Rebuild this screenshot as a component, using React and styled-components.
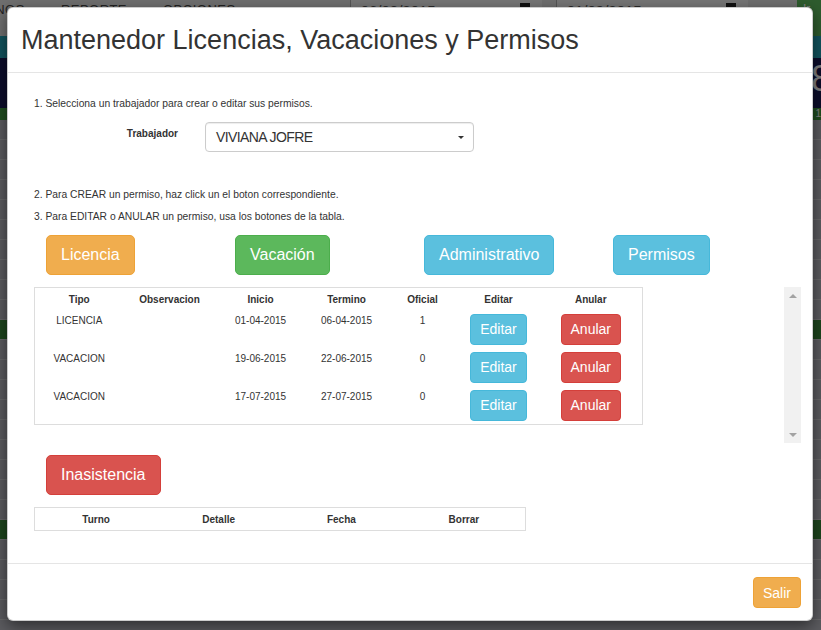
import React from 'react'
import styled, { createGlobalStyle } from 'styled-components'

const GlobalStyle = createGlobalStyle`
  html, body {
    margin: 0;
    padding: 0;
    width: 821px;
    height: 630px;
    overflow: hidden;
    font-family: "Liberation Sans", Arial, sans-serif;
    color: #333;
  }
  * { box-sizing: border-box; }
`

const permisos = [
  { tipo: 'LICENCIA', inicio: '01-04-2015', termino: '06-04-2015', oficial: '1' },
  { tipo: 'VACACION', inicio: '19-06-2015', termino: '22-06-2015', oficial: '0' },
  { tipo: 'VACACION', inicio: '17-07-2015', termino: '27-07-2015', oficial: '0' },
]

const pageRows = [
  'plain', 'plain', 'plain', 'plain', 'plain', 'plain', 'plain', 'plain', 'plain', 'plain',
  'green', 'plain', 'plain', 'plain', 'plain', 'plain', 'plain', 'plain', 'plain', 'plain',
  'green', 'plain', 'plain', 'plain', 'plain', 'plain',
]

function App() {
  return (
    <Screen>
      <GlobalStyle />
      <Page>
        <NavBar>
          <NavItem>TURNOS</NavItem>
          <NavItem>REPORTE</NavItem>
          <NavItem>OPCIONES</NavItem>
          <DateGroup>
            <DateText>06/08/2015</DateText>
            <CalIcon />
          </DateGroup>
          <DateGroup>
            <DateText>01/09/2015</DateText>
            <CalIcon />
          </DateGroup>
          <GoButton>Ir</GoButton>
        </NavBar>
        <TealBar />
        <StatsBar><BigNum>8</BigNum></StatsBar>
        <GreenBar>1</GreenBar>
        {pageRows.map((tone, i) => (
          <PageRow key={i} tone={tone} />
        ))}
      </Page>

      <Backdrop />

      <Modal>
        <Header>
          <Title>Mantenedor Licencias, Vacaciones y Permisos</Title>
        </Header>

        <Body>
          <Help mt={0}>1. Selecciona un trabajador para crear o editar sus permisos.</Help>
          <FormRow>
            <Label>Trabajador</Label>
            <Select>
              <span>VIVIANA JOFRE</span>
              <Caret />
            </Select>
          </FormRow>
          <Help mt={36}>2. Para CREAR un permiso, haz click un el boton correspondiente.</Help>
          <Help mt={8}>3. Para EDITAR o ANULAR un permiso, usa los botones de la tabla.</Help>

          <ActionGrid>
            <BigButton kind="warning">Licencia</BigButton>
            <BigButton kind="success">Vacación</BigButton>
            <BigButton kind="info">Administrativo</BigButton>
            <BigButton kind="info">Permisos</BigButton>
          </ActionGrid>

          <ScrollArea>
            <ScrollContent>
              <Table width={608}>
                <colgroup>
                  <col style={{ width: 89 }} />
                  <col style={{ width: 92 }} />
                  <col style={{ width: 90 }} />
                  <col style={{ width: 82 }} />
                  <col style={{ width: 70 }} />
                  <col style={{ width: 82 }} />
                  <col style={{ width: 103 }} />
                </colgroup>
                <thead>
                  <tr>
                    <Th>Tipo</Th>
                    <Th>Observacion</Th>
                    <Th>Inicio</Th>
                    <Th>Termino</Th>
                    <Th>Oficial</Th>
                    <Th>Editar</Th>
                    <Th>Anular</Th>
                  </tr>
                </thead>
                <tbody>
                  {permisos.map((p, i) => (
                    <tr key={i}>
                      <Td>{p.tipo}</Td>
                      <Td></Td>
                      <Td>{p.inicio}</Td>
                      <Td>{p.termino}</Td>
                      <Td>{p.oficial}</Td>
                      <Td><SmallButton kind="info">Editar</SmallButton></Td>
                      <Td><SmallButton kind="danger">Anular</SmallButton></Td>
                    </tr>
                  ))}
                </tbody>
              </Table>
            </ScrollContent>
            <ScrollBar>
              <Arrow dir="up" />
              <Arrow dir="down" />
            </ScrollBar>
          </ScrollArea>

          <InasistenciaRow>
            <BigButton kind="danger">Inasistencia</BigButton>
          </InasistenciaRow>

          <Table width={492} mt={12}>
            <thead>
              <tr>
                <Th>Turno</Th>
                <Th>Detalle</Th>
                <Th>Fecha</Th>
                <Th>Borrar</Th>
              </tr>
            </thead>
          </Table>
        </Body>

        <Footer>
          <SmallButton kind="warning">Salir</SmallButton>
        </Footer>
      </Modal>
    </Screen>
  )
}

export default App

const colors = {
  warning: { bg: '#f0ad4e', border: '#eea236' },
  success: { bg: '#5cb85c', border: '#4cae4c' },
  info: { bg: '#5bc0de', border: '#46b8da' },
  danger: { bg: '#d9534f', border: '#d43f3a' },
}

const Screen = styled.div`
  position: relative;
  width: 821px;
  height: 630px;
  overflow: hidden;
  background: #b6b6be;
`

/* page behind the modal */
const Page = styled.div`
  display: flex;
  flex-direction: column;
`
const NavBar = styled.div`
  display: flex;
  align-items: flex-start;
  height: 36px;
  background: #dedede;
  padding-top: 2px;
`
const NavItem = styled.span`
  font-size: 13px;
  color: #444;
  letter-spacing: 0.5px;
  margin-right: 36px;
  &:first-child {
    margin-left: -33px;
  }
`
const DateGroup = styled.div`
  display: flex;
  align-items: flex-start;
  justify-content: space-between;
  width: 192px;
  height: 36px;
  margin-top: -2px;
  padding: 2px 12px 0 10px;
  border-left: 1px solid #aaa;
  background: #ececec;
  &:first-of-type {
    margin-left: 78px;
  }
  & + & {
    margin-left: 14px;
  }
`
const DateText = styled.span`
  font-size: 15px;
  color: #555;
`
const CalIcon = styled.span`
  width: 10px;
  height: 10px;
  margin-top: 1px;
  background: #222;
`
const GoButton = styled.span`
  margin-left: auto;
  margin-top: -2px;
  width: 24px;
  height: 36px;
  background: #5cb85c;
  color: #fff;
  font-size: 12px;
  padding: 2px 6px;
`
const TealBar = styled.div`
  height: 22px;
  background: #24a6bb;
`
const StatsBar = styled.div`
  display: flex;
  justify-content: flex-end;
  height: 50px;
  background: #181a55;
`
const BigNum = styled.span`
  color: #fff;
  font-size: 36px;
  margin-right: -10px;
`
const GreenBar = styled.div`
  height: 12px;
  background: #3f9a3f;
  color: #fff;
  font-size: 10px;
  text-align: right;
`
const PageRow = styled.div`
  height: 20px;
  background: ${p => (p.tone === 'green' ? '#3a8a3a' : '#b6b6be')};
  border-bottom: 1px solid #d0d0d4;
`
const Backdrop = styled.div`
  position: absolute;
  inset: 0;
  background: rgba(0, 0, 0, 0.5);
`

/* modal */
const Modal = styled.div`
  position: absolute;
  top: 7px;
  left: 7px;
  width: 806px;
  background: #fff;
  border: 1px solid rgba(0, 0, 0, 0.2);
  border-radius: 6px;
  box-shadow: 0 5px 15px rgba(0, 0, 0, 0.5);
  display: flex;
  flex-direction: column;
`
const Header = styled.div`
  height: 65px;
  display: flex;
  align-items: center;
  padding: 0 13px;
  border-bottom: 1px solid #e5e5e5;
`
const Title = styled.h4`
  margin: 0;
  font-size: 27px;
  line-height: 1;
  font-weight: normal;
  color: #333;
`
const Body = styled.div`
  display: flex;
  flex-direction: column;
  align-items: flex-start;
  padding: 24px 12px 32px 26px;
`
const Help = styled.p`
  margin: ${p => p.mt}px 0 0;
  font-size: 10.3px;
  line-height: 14px;
  color: #333;
`
const FormRow = styled.div`
  display: flex;
  align-items: flex-start;
  margin-top: 11px;
`
const Label = styled.label`
  width: 144px;
  text-align: right;
  font-size: 10px;
  line-height: 14px;
  font-weight: bold;
  padding-top: 5px;
  margin-right: 27px;
`
const Select = styled.div`
  width: 269px;
  height: 30px;
  display: flex;
  align-items: center;
  justify-content: space-between;
  padding: 0 9px 0 10px;
  border: 1px solid #ccc;
  border-radius: 4px;
  box-shadow: inset 0 1px 1px rgba(0, 0, 0, 0.075);
  font-size: 14px;
  color: #333;
  letter-spacing: -0.6px;
`
const Caret = styled.span`
  width: 0;
  height: 0;
  border-left: 3px solid transparent;
  border-right: 3px solid transparent;
  border-top: 3px solid #333;
`
const ActionGrid = styled.div`
  display: grid;
  grid-template-columns: repeat(4, 189px);
  justify-items: start;
  margin: 11px 0 0 12px;
`
const BigButton = styled.button`
  height: 40px;
  padding: 0 14px;
  font-family: inherit;
  font-size: 16px;
  color: #fff;
  background: ${p => colors[p.kind].bg};
  border: 1px solid ${p => colors[p.kind].border};
  border-radius: 5px;
  cursor: pointer;
`
const SmallButton = styled.button`
  height: 31px;
  padding: 0 9px;
  font-family: inherit;
  font-size: 14px;
  color: #fff;
  background: ${p => colors[p.kind].bg};
  border: 1px solid ${p => colors[p.kind].border};
  border-radius: 4px;
  cursor: pointer;
`
const ScrollArea = styled.div`
  display: flex;
  width: 767px;
  height: 156px;
  margin-top: 12px;
`
const ScrollContent = styled.div`
  flex: 1;
`
const ScrollBar = styled.div`
  width: 17px;
  display: flex;
  flex-direction: column;
  justify-content: space-between;
  align-items: center;
  padding: 7px 0 6px;
  background: #f1f1f1;
`
const Arrow = styled.span`
  width: 0;
  height: 0;
  border-left: 4px solid transparent;
  border-right: 4px solid transparent;
  ${p => (p.dir === 'up' ? 'border-bottom: 4px solid #a3a3a3;' : 'border-top: 4px solid #a3a3a3;')}
`
const Table = styled.table`
  width: ${p => p.width}px;
  margin-top: ${p => p.mt || 0}px;
  border-collapse: collapse;
  border: 1px solid #ddd;
  table-layout: fixed;
`
const Th = styled.th`
  height: 23px;
  padding: 0 4px;
  font-size: 10px;
  font-weight: bold;
  color: #333;
  text-align: center;
  vertical-align: middle;
`
const Td = styled.td`
  height: 38px;
  padding: 3px 4px;
  font-size: 10px;
  line-height: 14px;
  color: #333;
  text-align: center;
  vertical-align: top;
`
const InasistenciaRow = styled.div`
  margin: 12px 0 0 12px;
`
const Footer = styled.div`
  display: flex;
  justify-content: flex-end;
  padding: 13px 11px 12px;
  border-top: 1px solid #e5e5e5;
`
